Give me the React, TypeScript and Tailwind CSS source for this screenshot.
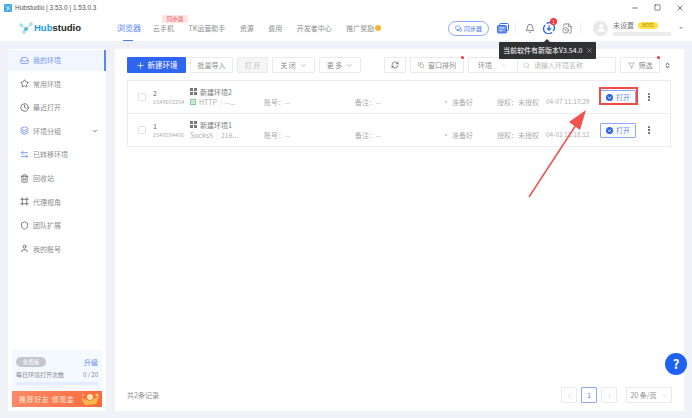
import { Bell, ChevronDown, ChevronLeft, ChevronRight, ChevronsUpDown, Clock, Filter, Layers, FileClock, Minus, MonitorSmartphone, Plus, RefreshCw, Search, Square, Star, Trash2, User, X, Shield, Copy, Frame, ArrowLeftRight, MoreVertical, Check, Inbox } from "lucide-react"

const nav = ["云手机", "TK运营助手", "资源", "费用", "开发者中心"]

const menu = [
  { icon: Star, label: "常用环境" },
  { icon: Clock, label: "最近打开" },
  { icon: Layers, label: "环境分组", arrow: true, blue: true },
  { icon: ArrowLeftRight, label: "已转移环境", blue: true },
  { icon: Trash2, label: "回收站" },
  { icon: Frame, label: "代理视角" },
  { icon: Shield, label: "团队扩展" },
  { icon: User, label: "我的账号" },
]

const rows = [
  { no: "2", id: "1549602254", name: "新建环境2", proxy: "HTTP", ip: "--...", time: "04-07 11:13:29", tag: true },
  { no: "1", id: "1549594400", name: "新建环境1", proxy: "Socks5", ip: "216...", time: "04-02 12:18:12", tag: false },
]

const ToolButton = (props: { children: React.ReactNode; className?: string; dot?: boolean }) => {
  return (
    <div className={"relative h-4 flex items-center justify-center gap-1 border border-[#e8eaef] rounded-[1px] bg-white text-[7px] text-[#8c8c8c] " + (props.className ?? "")}>
      {props.children}
      {props.dot && <span className="absolute -top-[2px] -right-[1px] w-[3px] h-[3px] rounded-full bg-[#f5353f]"></span>}
    </div>
  )
}

const Row = (props: { row: (typeof rows)[number] }) => {
  const row = props.row
  return (
    <div className="h-[33px] flex items-center border-b border-[#ebedf0] text-[7px] text-[#adadad]">
      <span className="ml-[10px] w-2 h-2 border border-[#e1e3e8] rounded-[1px] shrink-0"></span>
      <div className="ml-[7px] w-[37px] shrink-0">
        <div className="text-[7px] leading-[10px] text-[#666]">{row.no}</div>
        <div className="text-[5.5px] leading-[9px] text-[#adadad] tracking-[0.1px]">{row.id}</div>
      </div>
      <div className="w-[74px] shrink-0">
        <div className="flex items-center gap-[3px] leading-[10px] text-[#777]">
          <svg width="7" height="7" viewBox="0 0 7 7">
            <path d="M0 0h3v3H0zM4 0h3v3H4zM0 4h3v3H0zM4 4h3v3H4z" fill="#777" />
          </svg>
          {row.name}
        </div>
        <div className="flex items-center gap-[3px] leading-[11px]">
          {row.tag && (
            <span className="w-[6px] h-[6px] bg-[#d6f2df] border border-[#7fd09a] flex items-center justify-center">
              <Check className="w-1 h-1 text-[#3aa862]" />
            </span>
          )}
          <span>{row.proxy}</span>
          <span className="text-[#e6e6e6]">|</span>
          <span>{row.ip}</span>
        </div>
      </div>
      <div className="w-[91px] shrink-0 pt-[10px]">账号：--</div>
      <div className="w-[90px] shrink-0 pt-[10px]">备注：--</div>
      <div className="w-[52px] shrink-0 pt-[10px] flex items-center gap-[5px]">
        <span className="w-[2px] h-[2px] rounded-full bg-[#c0c0c0]"></span>
        准备好
      </div>
      <div className="w-[49px] shrink-0 pt-[10px]">授权：未授权</div>
      <div className="w-[54px] shrink-0 pt-[10px] text-[6.5px] whitespace-nowrap">{row.time}</div>
      <div className="w-[36px] h-[15px] border border-[#8aa8f5] rounded-[1px] flex items-center justify-center gap-[3px] text-[7px] text-[#5b85f5] shrink-0">
        <svg width="7" height="7" viewBox="0 0 7 7">
          <circle cx="3.5" cy="3.5" r="3.5" fill="#2563eb" />
          <path d="M2 2.5 L3.5 5 L5 2.5" stroke="#fff" strokeWidth="0.8" fill="none" />
        </svg>
        打开
      </div>
      <MoreVertical className="ml-[8px] w-[10px] h-[10px] text-[#333]" strokeWidth={2.5} />
    </div>
  )
}

export default function App() {
  return (
    <div className="relative w-[692px] h-[418px] overflow-hidden flex flex-col bg-[#f0f2f7] font-['Noto_Sans_CJK_SC','Liberation_Sans',sans-serif]">
      {/* title bar */}
      <div className="h-[15px] bg-white flex items-center pl-1 shrink-0">
        <svg width="8" height="8" viewBox="0 0 8 8" className="mr-[3px]">
          <rect width="8" height="8" rx="1" fill="#3fa9e8" />
          <path d="M1.5 2 L4 4 L6.5 1.5 M4 4 L3 6.5 M4 4 L6.5 6" stroke="#fff" strokeWidth="0.8" fill="none" />
        </svg>
        <span className="text-[6.5px] text-[#555] font-['Liberation_Sans',sans-serif]">Hubstudio | 3.53.0 | 1.53.0.3</span>
        <div className="ml-auto flex items-center gap-[15px] pr-2 text-[#333]">
          <Minus className="w-2 h-2" />
          <Square className="w-[7px] h-[7px]" strokeWidth={2} />
          <X className="w-2 h-2" />
        </div>
      </div>

      {/* header */}
      <div className="h-[26px] bg-white flex items-center shrink-0">
        <div className="ml-[19px] w-[98px] flex items-center">
          <svg width="15" height="12" viewBox="0 0 15 12">
            <g stroke="#4fb8e8" strokeWidth="0.7" fill="#fff">
              <path d="M2 3 L7 7 L12 2 M7 7 L5 10" />
              <circle cx="2" cy="3" r="1.2" />
              <circle cx="7" cy="7" r="1.6" fill="#4fb8e8" />
              <circle cx="12" cy="2" r="1.2" />
              <circle cx="5" cy="10" r="1.2" />
            </g>
          </svg>
          <span className="text-[9.5px] font-bold leading-none font-['Liberation_Sans',sans-serif] text-[#222]">
            <span className="text-[#1a9be8]">Hub</span>studio
          </span>
        </div>
        <div className="relative h-full w-[36px] flex items-center text-[8px] text-[#5b85f5]">
          浏览器
          <span className="absolute bottom-0 left-[6px] w-[10px] h-[1px] bg-[#4a7af5]"></span>
        </div>
        <div className="flex items-center gap-[14.5px] text-[7px] text-[#8c8c8c]">
          {nav.map((item) => (
            <span key={item} className="relative whitespace-nowrap">
              {item}
              {item === "云手机" && (
                <span className="absolute -top-[8px] left-[9px] w-[26px] h-[8px] bg-[#fde3e3] rounded-[1px] text-[5.5px] leading-[8px] text-center text-[#ef5b5b]">同步器</span>
              )}
            </span>
          ))}
          <span className="flex items-center gap-[1px] whitespace-nowrap">
            推广奖励
            <span className="w-[6px] h-[6px] rounded-full bg-[#f5b82e]"></span>
          </span>
        </div>
        <div className="ml-auto flex items-center">
          <div className="w-[41px] h-[15px] border border-[#8aa8f5] rounded-full flex items-center justify-center gap-[2px] text-[6px] text-[#4a7af5]">
            <MonitorSmartphone className="w-[7px] h-[7px]" />
            同步器
          </div>
          <svg className="ml-2" width="12" height="11" viewBox="0 0 12 11">
            <rect x="2.5" y="0.5" width="9" height="7" rx="1" fill="none" stroke="#3d6ff5" />
            <rect x="0.5" y="2.5" width="9" height="7.5" rx="1" fill="#6f93f5" stroke="#3d6ff5" />
            <path d="M2.5 5h5M2.5 7.5h3" stroke="#fff" strokeWidth="0.8" />
          </svg>
          <span className="ml-[6px] w-px h-[10px] bg-[#eee]"></span>
          <Bell className="ml-[9px] w-[10px] h-[11px] text-[#444]" strokeWidth={1.5} />
          <div className="relative ml-2">
            <svg width="12" height="12" viewBox="0 0 12 12" className="block">
              <path d="M2.2 3 A5 5 0 0 0 9 10.5 M10 9 A5 5 0 0 0 3.5 1.5" stroke="#2f66ef" strokeWidth="1.3" fill="none" />
              <path d="M6 3.5 V8 M4 6.2 L6 8.2 L8 6.2" stroke="#2f66ef" strokeWidth="1.3" fill="none" />
            </svg>
            <span className="absolute -top-[4px] left-[7px] w-[7px] h-[7px] rounded-full bg-[#f5353f] text-[5px] leading-[7px] text-center text-white">1</span>
          </div>
          <FileClock className="ml-[7px] w-[11px] h-[11px] text-[#666]" strokeWidth={1.5} />
          <span className="ml-[7px] w-px h-[10px] bg-[#eee]"></span>
          <span className="ml-[12px] w-[15px] h-[15px] rounded-full bg-[#e8e8e8] flex items-center justify-center">
            <User className="w-[10px] h-[10px] text-white fill-white" />
          </span>
          <div className="ml-[5px] w-[60px]">
            <div className="flex items-center gap-[4px] text-[7px] leading-[9px] text-[#777]">
              未设置
              <span className="w-[20px] h-[7px] bg-[#fde047] rounded-full text-[4.5px] leading-[7px] text-center text-[#a08000]">BOSS</span>
            </div>
            <div className="mt-[2px] w-[58px] h-[4px] bg-[#ececec]"></div>
          </div>
          <ChevronDown className="ml-[5px] mr-2 w-[6px] h-[6px] text-[#999] fill-[#999]" />
        </div>
      </div>

      {/* body */}
      <div className="flex-1 flex gap-[9px] pt-2 pr-2 pb-[7px] pl-2 min-h-0">
        <aside className="w-[98px] bg-white flex flex-col shrink-0">
          <div className="mt-[1px] mb-[1px] h-[21px] bg-[#f2f6fe] border-r-[2px] border-[#5b85f5] flex items-center pl-[12px] gap-[4px] text-[7px] text-[#6f93f5] shrink-0">
            <Inbox className="w-[9px] h-[9px]" />
            我的环境
          </div>
          {menu.map((item) => (
            <div key={item.label} className="h-[23.6px] flex items-center pl-[12px] gap-[4px] text-[7px] text-[#8c8c8c] shrink-0">
              <item.icon className={"w-[9px] h-[9px] " + (item.blue ? "text-[#5b85f5]" : "text-[#555]")} />
              {item.label}
              {item.arrow && <ChevronDown className="ml-auto mr-[8px] w-[6px] h-[6px] text-[#444]" strokeWidth={3} />}
            </div>
          ))}
          <div className="mt-auto mx-1 mb-1">
            <div className="h-[41px] bg-[#f4f8ff] px-1 pt-[7px]">
              <div className="flex items-center justify-between">
                <span className="w-[30px] h-[10px] bg-[#c4c6cc] rounded-full text-[5.5px] leading-[10px] text-center text-white">免费版</span>
                <span className="text-[7px] text-[#5b85f5]">升级</span>
              </div>
              <div className="mt-[2px] flex items-center justify-between text-[6px] leading-[10px] text-[#888]">
                每日环境打开次数
                <span>0 / 20</span>
              </div>
              <div className="mt-[2px] h-[3px] rounded-full bg-[#e3edfd]"></div>
            </div>
            <div className="h-4 bg-gradient-to-r from-[#fb8a66] to-[#fa6a3c] flex items-center pl-[7px] text-[7px] tracking-[0.6px] text-[#ffeedd] whitespace-nowrap">
              推荐好友 领现金
              <svg className="ml-[5px]" width="22" height="14" viewBox="0 0 22 14">
                <path d="M2 6 L11 9 L20 4 L17 12 L6 13 Z" fill="#f7b84f" />
                <circle cx="11" cy="5" r="3" fill="#fde4b0" />
                <circle cx="18" cy="3" r="1.5" fill="#fbd38a" />
                <circle cx="4" cy="3" r="1" fill="#fbd38a" />
              </svg>
            </div>
          </div>
        </aside>

        <main className="flex-1 bg-white flex flex-col pt-[8px] px-[12px] pb-2 min-w-0">
          {/* toolbar */}
          <div className="flex items-center h-4">
            <div className="w-[59px] h-4 rounded-[1px] bg-[#2f66ef] flex items-center justify-center gap-[3px] text-[7.5px] text-white">
              <Plus className="w-[9px] h-[9px]" />
              新建环境
            </div>
            <ToolButton className="ml-[4px] w-[43px]">批量导入</ToolButton>
            <div className="ml-[4px] w-[31px] h-4 flex items-center justify-center border border-[#e8eaef] rounded-[1px] bg-[#f5f5f5] text-[7px] text-[#c0c0c0]">打 开</div>
            <ToolButton className="ml-[4px] w-[43px]">
              关 闭 <ChevronDown className="w-[7px] h-[7px]" />
            </ToolButton>
            <ToolButton className="ml-[4px] w-[42px]">
              更 多 <ChevronDown className="w-[7px] h-[7px]" />
            </ToolButton>
            <ToolButton className="ml-[23px] w-[22px]">
              <RefreshCw className="w-[8px] h-[8px] text-[#555]" />
            </ToolButton>
            <ToolButton className="ml-[4px] w-[54px]" dot>
              <Copy className="w-[6px] h-[6px]" />
              窗口排列
            </ToolButton>
            <ToolButton className="ml-[4px] w-[50px] rounded-r-none">
              环境 <ChevronDown className="ml-[5px] w-[7px] h-[7px] text-[#bbb]" />
            </ToolButton>
            <div className="w-[98px] h-4 flex items-center gap-1 pl-[5px] border border-l-0 border-[#e8eaef] rounded-r-[1px] bg-white text-[7px] text-[#b8b8b8]">
              <Search className="w-[7px] h-[7px]" />
              请输入环境名称
            </div>
            <ToolButton className="ml-[4px] w-[40px]" dot>
              <Filter className="w-[7px] h-[7px]" />
              筛选
            </ToolButton>
            <ChevronsUpDown className="ml-[4px] w-[7px] h-[7px] text-[#333]" strokeWidth={3} />
          </div>

          {/* table */}
          <div className="mt-[7px] w-[544px] border-t border-x border-[#ebedf0]">
            {rows.map((row) => (
              <Row key={row.no} row={row} />
            ))}
          </div>

          {/* footer */}
          <div className="mt-auto flex items-center h-4 text-[7px] text-[#8c8c8c]">
            共2条记录
            <div className="ml-auto flex items-center">
              <ToolButton className="w-4"><ChevronLeft className="w-[7px] h-[7px] text-[#bbb]" /></ToolButton>
              <div className="ml-1 w-4 h-4 flex items-center justify-center border border-[#8aa8f5] rounded-[1px] bg-white text-[7px] text-[#4a7af5]">1</div>
              <ToolButton className="ml-1 w-4"><ChevronRight className="w-[7px] h-[7px] text-[#bbb]" /></ToolButton>
              <ToolButton className="ml-[9px] w-[46px]">20 条/页 <ChevronDown className="w-[7px] h-[7px] text-[#bbb]" /></ToolButton>
            </div>
          </div>
        </main>
      </div>

      {/* overlays */}
      <div className="absolute left-[499px] top-[42px] w-[97px] h-[17px] rounded-[1px] bg-[#303133] flex items-center pl-1 text-[7px] text-white whitespace-nowrap">
        当前软件有新版本V3.54.0
        <X className="ml-[4px] w-[7px] h-[7px] text-[#bbb]" />
        <span className="absolute -top-[3px] left-[45px] w-0 h-0 border-x-[3px] border-x-transparent border-b-[3px] border-b-[#303133]"></span>
      </div>
      <div className="absolute left-[599px] top-[87px] w-[39px] h-[18px] border-[2px] border-[#ee4b4b]"></div>
      <svg className="absolute left-[525px] top-[105px]" width="70" height="95" viewBox="0 0 70 95">
        <path d="M4 92 L51 20" stroke="#f0524f" strokeWidth="1.5" fill="none" />
        <path d="M61 5 L44 17 L55 25 Z" fill="#f0524f" />
      </svg>
      <div className="absolute left-[665px] top-[353px] w-[22px] h-[22px] rounded-full bg-[#1f62f2] flex items-center justify-center text-[13px] font-bold text-white">?</div>
    </div>
  )
}
